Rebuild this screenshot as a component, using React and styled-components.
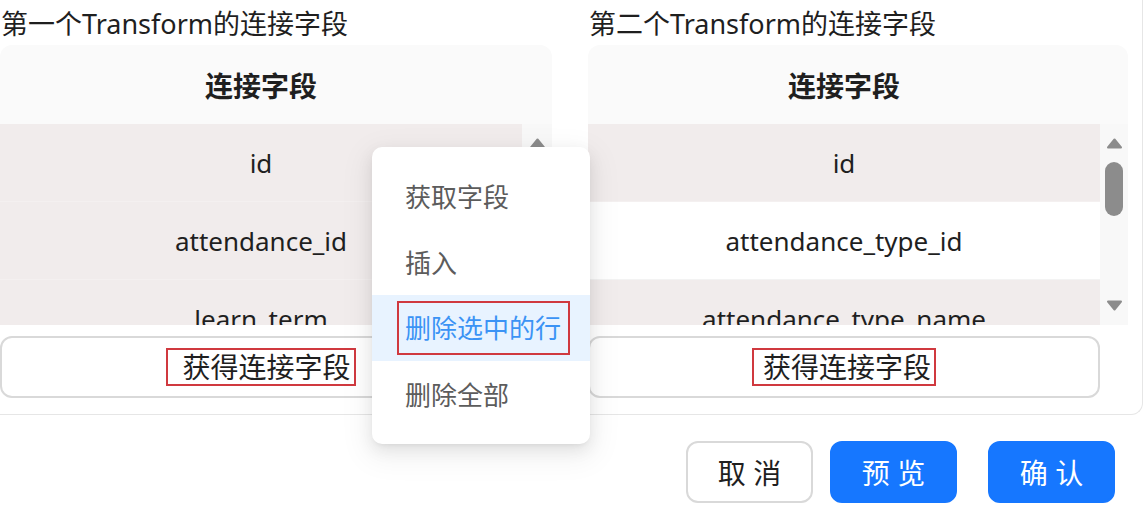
import React from "react";
import styled, { createGlobalStyle } from "styled-components";

const GlobalStyle = createGlobalStyle`
  body {
    margin: 0;
    background: #fff;
    font-family: "Noto Sans", "Noto Sans CJK SC", sans-serif;
    color: #1f1f1f;
    overflow: hidden;
  }
`;

const Page = styled.div`
  position: relative;
  width: 1145px;
  height: 510px;
`;

const ModalBody = styled.div`
  width: 1129px;
  padding: 6px 13px 16px 0;
  border-right: 1px solid #e6e6e6;
  border-bottom: 1px solid #e6e6e6;
  border-bottom-right-radius: 12px;
`;

const Columns = styled.div`
  display: grid;
  grid-template-columns: 552px 540px;
  column-gap: 36px;
`;

const Panel = styled.div`
  display: flex;
  flex-direction: column;
`;

const Title = styled.div`
  height: 36px;
  line-height: 36px;
  font-size: 27px;
  padding-left: 1px;
  color: #1f1f1f;
  white-space: nowrap;
`;

const Card = styled.div`
  margin-top: 3px;
  border-radius: 12px 12px 0 0;
  overflow: hidden;
`;

const Head = styled.div`
  height: 79px;
  background: #fafafa;
  display: flex;
  align-items: center;
  justify-content: center;
  padding-right: ${(p) => p.$track}px;
  font-size: 28px;
  font-weight: 700;
  color: #1f1f1f;
`;

const Body = styled.div`
  height: 201px;
  display: flex;
  overflow: hidden;
`;

const Rows = styled.div`
  flex: 1;
  display: flex;
  flex-direction: column;
`;

const Row = styled.div`
  flex: 0 0 78px;
  display: flex;
  align-items: center;
  justify-content: center;
  font-size: 26px;
  background: ${(p) => (p.$pink ? "#f1ecec" : "#fff")};
  border-bottom: 1px solid ${(p) => (p.$pink ? "#f4f0f0" : "#f3f3f3")};
  box-sizing: border-box;
  color: #1f1f1f;
`;

const Track = styled.div`
  width: ${(p) => p.$w}px;
  background: #f8f8f8;
  display: flex;
  flex-direction: column;
  align-items: center;
  padding: 14px 0 14px;
  box-sizing: border-box;
`;

const Thumb = styled.div`
  width: 18px;
  height: 54px;
  margin-top: 13px;
  border-radius: 9px;
  background: #8c8c8c;
`;

const Spacer = styled.div`
  flex: 1;
`;

const GetButton = styled.button`
  margin-top: 11px;
  width: ${(p) => p.$w}px;
  height: 62px;
  background: #fff;
  border: 2px solid #d9d9d9;
  border-radius: 12px;
  display: flex;
  align-items: center;
  justify-content: center;
  font-family: inherit;
  font-size: 28px;
  color: #1f1f1f;
  padding: 0;
`;

const Marked = styled.span`
  display: inline-block;
  border: 2px solid #d0393f;
  line-height: ${(p) => p.$lh || 34}px;
  padding: 0 ${(p) => p.$padR || 3}px 0 ${(p) => p.$pad || 6}px;
  margin-left: ${(p) => p.$shift || 0}px;
`;

const Footer = styled.div`
  display: flex;
  justify-content: flex-end;
  padding: 26px 30px 0 0;
`;

const FootButton = styled.button`
  width: 127px;
  height: 62px;
  margin-left: ${(p) => p.$gap}px;
  border-radius: 12px;
  font-family: inherit;
  font-size: 28px;
  border: 2px solid ${(p) => (p.$primary ? "#1677ff" : "#d9d9d9")};
  background: ${(p) => (p.$primary ? "#1677ff" : "#fff")};
  color: ${(p) => (p.$primary ? "#fff" : "#1f1f1f")};
  padding: 0;
`;

const Menu = styled.ul`
  position: absolute;
  left: 372px;
  top: 147px;
  width: 218px;
  margin: 0;
  padding: 16px 0 17px;
  list-style: none;
  background: #fff;
  border-radius: 10px;
  box-shadow: 0 6px 16px 0 rgba(0, 0, 0, 0.08), 0 3px 6px -4px rgba(0, 0, 0, 0.12),
    0 9px 28px 8px rgba(0, 0, 0, 0.05);
`;

const MenuItem = styled.li`
  height: 66px;
  display: flex;
  align-items: center;
  padding-left: 33px;
  font-size: 26px;
  color: ${(p) => (p.$active ? "#3b93f5" : "#5c5c5c")};
  background: ${(p) => (p.$active ? "#e8f3ff" : "transparent")};
`;

const Arrow = ({ down }) => (
  <svg width="17" height="11" viewBox="0 0 17 11">
    <path
      d={down ? "M2 1.5 H15 L8.5 9.5 Z" : "M2 9.5 H15 L8.5 1.5 Z"}
      fill="#8c8c8c"
      stroke="#8c8c8c"
      strokeWidth="2"
      strokeLinejoin="round"
    />
  </svg>
);

const panels = [
  {
    title: "第一个Transform的连接字段",
    track: 30,
    rows: [
      { name: "id", pink: true },
      { name: "attendance_id", pink: true },
      { name: "learn_term", pink: true },
    ],
    pad: 14,
  },
  {
    title: "第二个Transform的连接字段",
    track: 28,
    rows: [
      { name: "id", pink: true },
      { name: "attendance_type_id", pink: false },
      { name: "attendance_type_name", pink: true },
    ],
    pad: 9,
  },
];

const menuItems = ["获取字段", "插入", "删除选中的行", "删除全部"];

export default function App() {
  return (
    <Page>
      <GlobalStyle />
      <ModalBody>
        <Columns>
          {panels.map((p, i) => (
            <Panel key={i}>
              <Title>{p.title}</Title>
              <Card>
                <Head $track={p.track}>连接字段</Head>
                <Body>
                  <Rows>
                    {p.rows.map((r) => (
                      <Row key={r.name} $pink={r.pink}>
                        {r.name}
                      </Row>
                    ))}
                  </Rows>
                  <Track $w={p.track}>
                    <Arrow />
                    <Thumb />
                    <Spacer />
                    <Arrow down />
                  </Track>
                </Body>
              </Card>
              <GetButton $w={(i === 0 ? 552 : 540) - p.track}>
                <Marked $pad={p.pad}>获得连接字段</Marked>
              </GetButton>
            </Panel>
          ))}
        </Columns>
      </ModalBody>
      <Footer>
        <FootButton $gap={0}>取 消</FootButton>
        <FootButton $gap={17} $primary>
          预 览
        </FootButton>
        <FootButton $gap={31} $primary>
          确 认
        </FootButton>
      </Footer>
      <Menu>
        {menuItems.map((m) => (
          <MenuItem key={m} $active={m === "删除选中的行"}>
            {m === "删除选中的行" ? (
              <Marked $shift={-8} $pad={6} $padR={7} $lh={50}>
                {m}
              </Marked>
            ) : (
              m
            )}
          </MenuItem>
        ))}
      </Menu>
    </Page>
  );
}
